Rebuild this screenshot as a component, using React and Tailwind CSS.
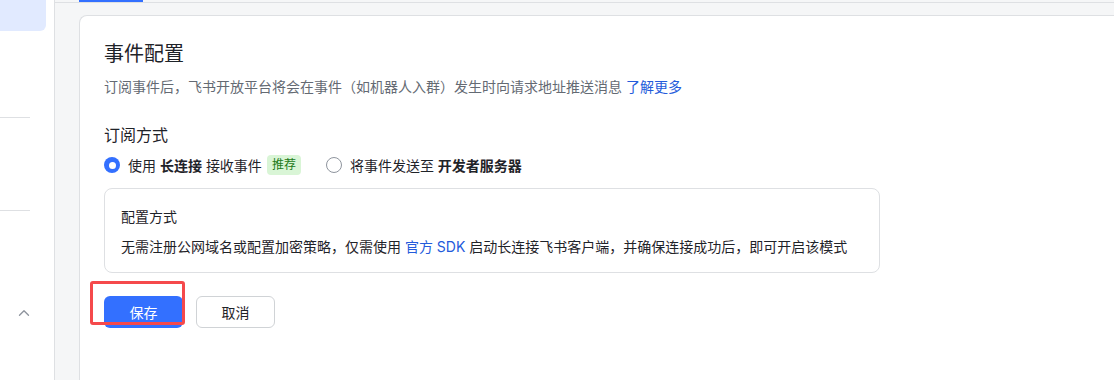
import { ChevronUp } from 'lucide-react';

function Radio({ checked }) {
  if (checked) {
    return (
      <span className="w-4 h-4 rounded-full bg-[#3370ff] flex items-center justify-center shrink-0">
        <span className="w-[7px] h-[7px] rounded-full bg-white" />
      </span>
    );
  }
  return <span className="block w-4 h-4 rounded-full border border-[#8f959e] bg-white shrink-0" />;
}

export default function App() {
  return (
    <div
      className="flex w-[1114px] h-[380px] overflow-hidden bg-white text-[#1f2329]"
      style={{ fontFamily: 'Inter, "Noto Sans CJK SC", sans-serif' }}
    >
      {/* sidebar */}
      <div className="w-[55px] shrink-0 border-r border-[#dee0e3] flex flex-col">
        <div className="w-[46px] h-[31px] bg-[#e1eaff] rounded-br-md" />
        <div className="mt-[86px] w-[30px] h-px bg-[#dee0e3]" />
        <div className="mt-[92px] w-[30px] h-px bg-[#dee0e3]" />
        <div className="mt-[93px] pl-[15px]">
          <ChevronUp size={18} strokeWidth={1.8} className="text-[#8f959e]" />
        </div>
      </div>

      {/* main */}
      <div className="flex-1 bg-[#f5f6f7] flex flex-col">
        <div className="relative h-[3px] border-b border-[#dee0e3]">
          <div className="absolute left-[24px] top-0 w-[64px] h-[2px] bg-[#3370ff]" />
        </div>
        <div className="mt-[12px] ml-[24px] flex-1 bg-white border-l border-t border-[#dee0e3] rounded-tl-lg pl-[24px] pt-[24px] flex flex-col">
          <h1 className="text-[20px] leading-[28px] font-normal">事件配置</h1>
          <p className="mt-[8px] text-[14px] leading-[22px] text-[#646a73]">
            订阅事件后，飞书开放平台将会在事件（如机器人入群）发生时向请求地址推送消息{' '}
            <span className="text-[#245bdb]">了解更多</span>
          </p>

          <h2 className="mt-[25px] text-[16px] leading-[24px]">订阅方式</h2>
          <div className="mt-[7px] flex items-center h-[22px] text-[14px]">
            <Radio checked />
            <span className="ml-[8px]">
              使用 <b className="font-semibold">长连接</b> 接收事件
            </span>
            <span className="ml-[5px] h-[20px] px-[5px] rounded bg-[#d9f5d6] text-[#237b19] text-[12px] leading-[20px]">
              推荐
            </span>
            <span className="ml-[25px] flex">
              <Radio />
            </span>
            <span className="ml-[8px]">
              将事件发送至 <b className="font-semibold">开发者服务器</b>
            </span>
          </div>

          <div className="mt-[12px] w-[776px] border border-[#dee0e3] rounded-lg pl-[16px] pt-[17px] pb-[14px] text-[14px] leading-[22px]">
            <div>配置方式</div>
            <div className="mt-[8px]">
              无需注册公网域名或配置加密策略，仅需使用{' '}
              <span className="text-[#245bdb]">官方 SDK</span> 启动长连接飞书客户端，并确保连接成功后，即可开启该模式
            </div>
          </div>

          <div className="relative mt-[23px] flex gap-[13px]">
            <button className="w-[79px] h-[32px] rounded-md bg-[#3370ff] text-white text-[14px]">保存</button>
            <button className="w-[79px] h-[32px] rounded-md border border-[#d0d3d6] bg-white text-[14px]">取消</button>
            <div className="absolute left-[-14px] top-[-15px] w-[95px] h-[44px] border-[3px] border-[#f5494b] rounded-[3px]" />
          </div>
        </div>
      </div>
    </div>
  );
}
